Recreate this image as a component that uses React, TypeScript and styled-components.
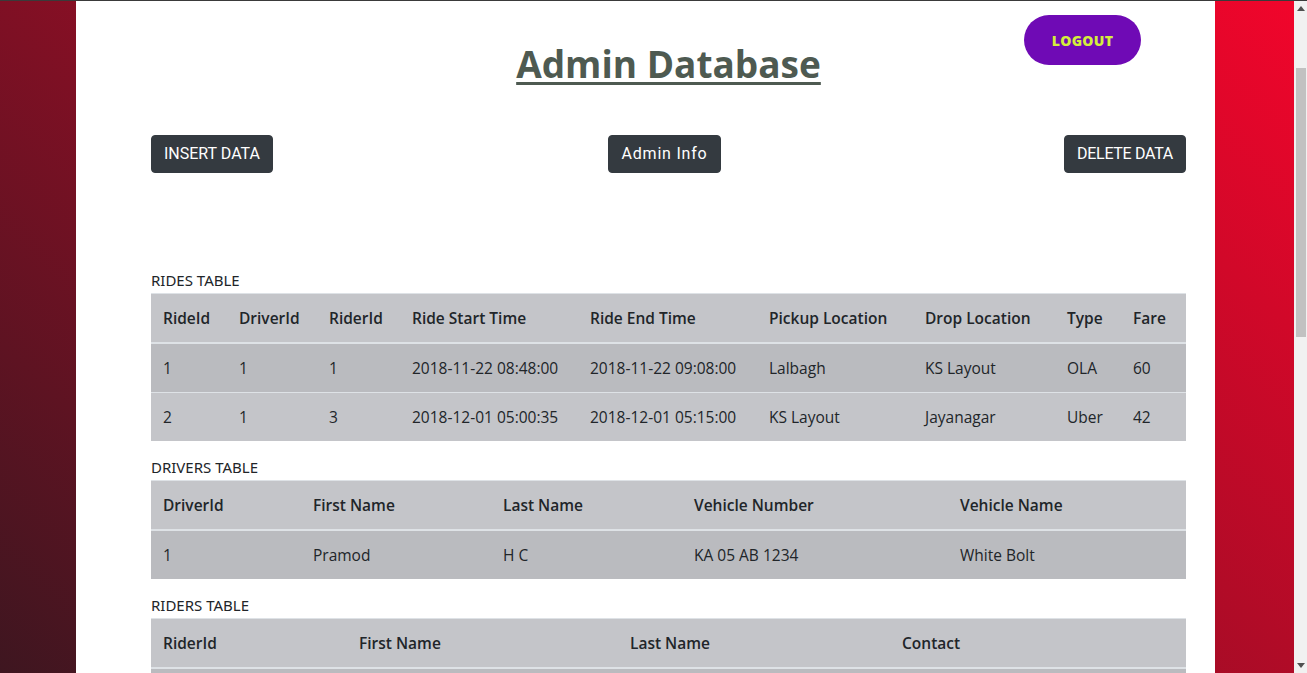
import React from "react";
import styled, { createGlobalStyle } from "styled-components";

const Global = createGlobalStyle`
  html, body { margin: 0; padding: 0; }
  body {
    border-top: 1px solid #3a3a3a;
    font-family: "Open Sans", "Noto Sans", sans-serif;
    color: #212529;
    overflow: hidden;
  }
`;

const Viewport = styled.div`
  display: flex;
  height: 672px;
  overflow: hidden;
`;

const Page = styled.div`
  flex: 1;
  min-width: 0;
  overflow: hidden;
  background: linear-gradient(42deg, #3e1620 0%, #f1052b 100%);
`;

const ScrollRail = styled.aside`
  width: 13px;
  flex: none;
  display: flex;
  flex-direction: column;
  align-items: center;
  background: #f1f1f1;
`;

const ArrowBox = styled.div`
  height: 15px;
  width: 100%;
  display: flex;
  align-items: center;
  justify-content: center;
`;

const Track = styled.div`
  flex: 1;
  width: 100%;
  padding: 52px 1px 0 2px;
  box-sizing: border-box;
`;

const Thumb = styled.div`
  height: 269px;
  background: #c1c1c1;
`;

const Card = styled.main`
  width: 1139px;
  min-height: 1610px;
  margin-left: 76px;
  background: #ffffff;
  padding: 0 29px 40px 75px;
  box-sizing: border-box;
`;

const Header = styled.header`
  display: grid;
  grid-template-columns: 1fr auto 1fr;
  align-items: start;
`;

const Title = styled.h1`
  grid-column: 2;
  margin: 41px 0 0;
  font-family: "Open Sans", sans-serif;
  font-weight: 700;
  font-size: 37px;
  line-height: 1.2;
  color: #4e5a51;
  text-decoration: underline;
  text-decoration-thickness: 3px;
  text-underline-offset: 4px;
`;

const Logout = styled.button`
  grid-column: 3;
  justify-self: end;
  margin: 14px 45px 0 0;
  width: 117px;
  height: 50px;
  border: none;
  border-radius: 25px;
  background: #6f0ab5;
  color: #d4ef3c;
  font-family: "Open Sans", sans-serif;
  font-weight: 800;
  font-size: 14px;
  letter-spacing: 0.3px;
  cursor: pointer;
`;

const ActionBar = styled.nav`
  display: flex;
  justify-content: space-between;
  align-items: center;
  margin-top: 49px;
`;

const DarkButton = styled.button<{ $shift?: number; $track?: number }>`
  height: 38px;
  padding: 6px 12px;
  border: 1px solid #343a40;
  border-radius: 4px;
  background: #343a40;
  color: #ffffff;
  font-family: Roboto, "Liberation Sans", sans-serif;
  font-size: 16px;
  line-height: 24px;
  letter-spacing: ${(p) => p.$track ?? 0}px;
  margin-right: ${(p) => p.$shift ?? 0}px;
  cursor: pointer;
`;

const Section = styled.section`
  &:first-of-type { margin-top: 97px; }
`;

const Caption = styled.div`
  font-family: "Noto Sans", "Open Sans", sans-serif;
  font-size: 15px;
  line-height: 23px;
  color: #212529;
  text-transform: uppercase;
  margin-top: -1px;
  margin-bottom: 1px;
`;

const Table = styled.table`
  width: 100%;
  border-collapse: collapse;
  table-layout: fixed;
  margin-bottom: 16px;
  font-family: "Open Sans", sans-serif;
  font-size: 15.5px;
  color: #212529;
`;

const HeadCell = styled.th`
  text-align: left;
  font-weight: 600;
  padding: 12px;
  line-height: 24px;
  background: #c4c5c9;
  border-top: 1px solid #dee2e6;
  border-bottom: 2px solid #dee2e6;
  white-space: nowrap;
`;

const Row = styled.tr<{ $striped: boolean }>`
  background: ${(p) => (p.$striped ? "#babbbf" : "#c4c5c9")};
`;

const Cell = styled.td`
  padding: 12px;
  line-height: 24px;
  border-top: 1px solid #dee2e6;
  white-space: nowrap;
`;

type TableSpec = {
  caption: string;
  widths: number[];
  head: string[];
  rows: (string | number)[][];
};

const tables: TableSpec[] = [
  {
    caption: "Rides Table",
    widths: [76, 90, 83, 178, 179, 156, 142, 66, 65],
    head: [
      "RideId",
      "DriverId",
      "RiderId",
      "Ride Start Time",
      "Ride End Time",
      "Pickup Location",
      "Drop Location",
      "Type",
      "Fare",
    ],
    rows: [
      [1, 1, 1, "2018-11-22 08:48:00", "2018-11-22 09:08:00", "Lalbagh", "KS Layout", "OLA", 60],
      [2, 1, 3, "2018-12-01 05:00:35", "2018-12-01 05:15:00", "KS Layout", "Jayanagar", "Uber", 42],
    ],
  },
  {
    caption: "Drivers Table",
    widths: [150, 190, 191, 266, 238],
    head: ["DriverId", "First Name", "Last Name", "Vehicle Number", "Vehicle Name"],
    rows: [[1, "Pramod", "H C", "KA 05 AB 1234", "White Bolt"]],
  },
  {
    caption: "Riders Table",
    widths: [196, 271, 272, 296],
    head: ["RiderId", "First Name", "Last Name", "Contact"],
    rows: [
      [1, "Rahul", "K S", "9876543210"],
      [3, "Anil", "Kumar", "9845012345"],
    ],
  },
];

function DataTable({ spec }: { spec: TableSpec }) {
  return (
    <Section>
      <Caption>{spec.caption}</Caption>
      <Table>
        <colgroup>
          {spec.widths.map((w, i) => (
            <col key={i} style={{ width: w }} />
          ))}
        </colgroup>
        <thead>
          <tr>
            {spec.head.map((h) => (
              <HeadCell key={h}>{h}</HeadCell>
            ))}
          </tr>
        </thead>
        <tbody>
          {spec.rows.map((r, i) => (
            <Row key={i} $striped={i % 2 === 0}>
              {r.map((c, j) => (
                <Cell key={j}>{c}</Cell>
              ))}
            </Row>
          ))}
        </tbody>
      </Table>
    </Section>
  );
}

function Arrow({ up }: { up: boolean }) {
  return (
    <ArrowBox>
      <svg width="8" height="5" viewBox="0 0 8 5">
        <polygon points={up ? "0,5 8,5 4,0" : "0,0 8,0 4,5"} fill="#505050" />
      </svg>
    </ArrowBox>
  );
}

export default function App() {
  return (
    <>
      <Global />
      <Viewport>
        <Page>
          <Card>
            <Header>
              <Title>Admin Database</Title>
              <Logout>LOGOUT</Logout>
            </Header>
            <ActionBar>
              <DarkButton>INSERT DATA</DarkButton>
              <DarkButton $shift={8} $track={0.8}>Admin Info</DarkButton>
              <DarkButton $track={-0.3}>DELETE DATA</DarkButton>
            </ActionBar>
            {tables.map((t) => (
              <DataTable key={t.caption} spec={t} />
            ))}
          </Card>
        </Page>
        <ScrollRail>
          <Arrow up />
          <Track>
            <Thumb />
          </Track>
          <Arrow up={false} />
        </ScrollRail>
      </Viewport>
    </>
  );
}
